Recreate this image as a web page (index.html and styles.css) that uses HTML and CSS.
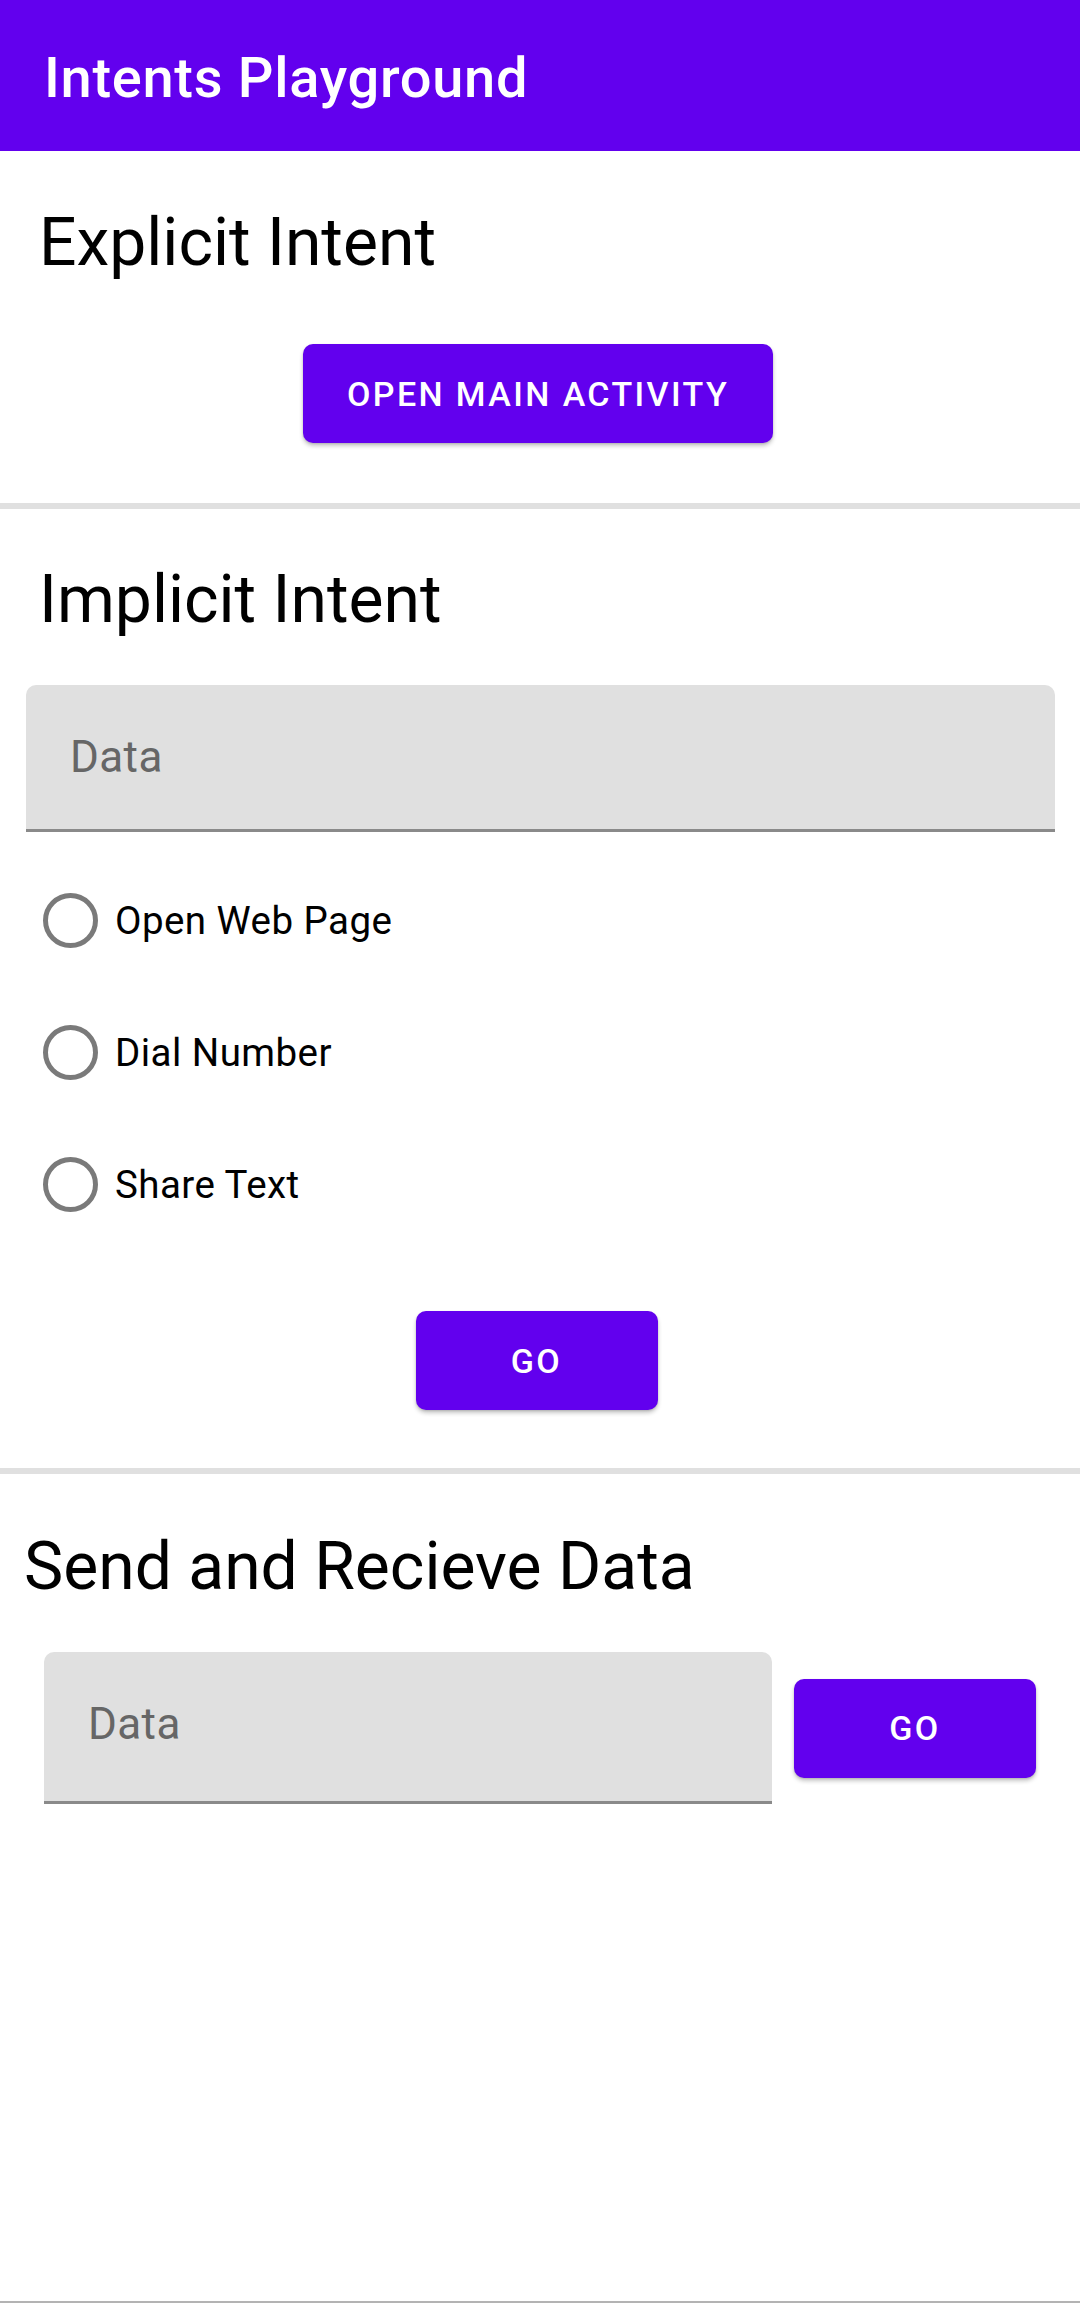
FILE: index.html
```html
<!DOCTYPE html>
<html lang="en">
<head>
<meta charset="utf-8">
<title>Intents Playground</title>
<link rel="stylesheet" href="styles.css">
</head>
<body>
<div class="screen">
  <header class="appbar">
    <h1 class="appbar-title">Intents Playground</h1>
  </header>
  <main class="content">
    <section class="section section-explicit">
      <h2 class="heading">Explicit Intent</h2>
      <div class="center-row center-wide">
        <button class="btn btn-wide">Open Main Activity</button>
      </div>
    </section>
    <div class="divider"></div>
    <section class="section section-implicit">
      <h2 class="heading">Implicit Intent</h2>
      <div class="field field-implicit"><span class="hint">Data</span></div>
      <div class="radio-group">
        <div class="radio-row"><span class="radio"></span><span class="radio-label">Open Web Page</span></div>
        <div class="radio-row"><span class="radio"></span><span class="radio-label">Dial Number</span></div>
        <div class="radio-row"><span class="radio"></span><span class="radio-label">Share Text</span></div>
      </div>
      <div class="center-row center-go">
        <button class="btn btn-go">Go</button>
      </div>
    </section>
    <div class="divider divider-2"></div>
    <section class="section section-send">
      <h2 class="heading heading-send">Send and Recieve Data</h2>
      <div class="send-row">
        <div class="field field-send"><span class="hint">Data</span></div>
        <button class="btn btn-go">Go</button>
      </div>
    </section>
  </main>
  <div class="nav-edge"></div>
</div>
</body>
</html>
```

FILE: styles.css
```css
* { box-sizing: border-box; }

html, body {
  margin: 0;
  padding: 0;
  background: #ffffff;
}

body {
  font-family: Roboto, "Noto Sans", "Liberation Sans", sans-serif;
  color: #000;
}

.screen {
  width: 1080px;
  height: 2303px;
  display: flex;
  flex-direction: column;
}

.appbar {
  height: 151px;
  background: #6200ee;
  padding: 46px 0 0 44px;
  flex: none;
}

.appbar-title {
  margin: 0;
  font-size: 56px;
  font-weight: 500;
  line-height: 64px;
  color: #ffffff;
  letter-spacing: 0.7px;
}

.content {
  flex: 1;
  display: flex;
  flex-direction: column;
}

.section {
  display: flex;
  flex-direction: column;
}

.heading {
  margin: 0;
  font-size: 66px;
  font-weight: 400;
  line-height: 78px;
  padding-left: 39px;
}

.section-explicit {
  padding-top: 53px;
}

.center-row {
  display: flex;
  justify-content: center;
}

.center-wide {
  margin-top: 62px;
  margin-bottom: 60px;
  padding-right: 4px;
}

.btn {
  border: none;
  background: #6200ee;
  color: #ffffff;
  font-family: Roboto, "Noto Sans", sans-serif;
  font-weight: 500;
  font-size: 34px;
  letter-spacing: 2.4px;
  text-transform: uppercase;
  height: 99px;
  border-radius: 10px;
  box-shadow: 0 3px 4px rgba(0, 0, 0, 0.22), 0 1px 2px rgba(0, 0, 0, 0.12);
  padding: 0;
  display: flex;
  align-items: center;
  justify-content: center;
}

.btn-wide {
  width: 470px;
}

.btn-go {
  width: 242px;
  flex: none;
}

.divider {
  height: 6px;
  background: #e0e0e0;
  flex: none;
}

.section-implicit {
  padding-top: 52px;
}

.field {
  background: #e0e0e0;
  border-radius: 10px 10px 0 0;
  border-bottom: 3px solid #8a8a8a;
  padding: 46px 0 0 44px;
}

.hint {
  font-size: 44px;
  line-height: 52px;
  color: #666666;
  letter-spacing: 0.4px;
  display: block;
}

.field-implicit {
  margin: 46px 25px 0 26px;
  height: 147px;
}

.radio-group {
  margin-top: 22px;
  display: flex;
  flex-direction: column;
}

.radio-row {
  height: 132px;
  display: flex;
  align-items: center;
  padding-left: 43px;
}

.radio {
  width: 55px;
  height: 55px;
  border-radius: 50%;
  border: 5.5px solid #7a7a7a;
  flex: none;
}

.radio-label {
  font-size: 38.5px;
  letter-spacing: 0.45px;
  margin-left: 17px;
  color: #000;
}

.center-go {
  margin-top: 61px;
  margin-bottom: 58px;
  padding-right: 7px;
}

.section-send {
  padding-top: 54px;
}

.heading-send {
  padding-left: 24px;
}

.send-row {
  margin-top: 46px;
  padding: 0 44px;
  display: flex;
  align-items: center;
  gap: 22px;
}

.field-send {
  flex: 1;
  height: 152px;
}

.nav-edge {
  height: 2px;
  background: #b3b3b3;
  flex: none;
}
```
